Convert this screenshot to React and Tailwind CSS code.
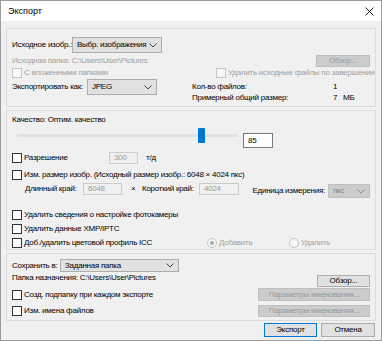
import React from "react";

function Chevron({ color = "#333" }) {
  return (
    <svg width="8" height="5" viewBox="0 0 8 5" className="shrink-0">
      <polyline points="0.5,0.5 4,4 7.5,0.5" fill="none" stroke={color} strokeWidth="1" />
    </svg>
  );
}

function Select({ value, className = "", disabled = false }) {
  return (
    <div
      className={`shrink-0 flex items-center justify-between border px-[4px] ${
        disabled ? "bg-[#cccccc] border-[#bfbfbf] text-[#838383]" : "bg-[#e1e1e1] border-[#adadad] text-black"
      } ${className}`}
    >
      <span>{value}</span>
      <Chevron color={disabled ? "#8a8a8a" : "#444"} />
    </div>
  );
}

function Check({ label, disabled = false, className = "" }) {
  return (
    <div className={`shrink-0 flex items-center ${className}`}>
      <span
        className={`w-[10px] h-[10px] border shrink-0 ${
          disabled ? "border-[#c4c4c4] bg-[#f7f7f7]" : "border-[#333333] bg-white"
        }`}
      />
      <span className={`ml-[2px] ${disabled ? "text-[#a0a0a0]" : "text-black"}`}>{label}</span>
    </div>
  );
}

function Radio({ label, checked = false, className = "" }) {
  return (
    <div className={`shrink-0 flex items-center ${className}`}>
      <span className="w-[10px] h-[10px] rounded-full border border-[#c4c4c4] bg-[#f7f7f7] flex items-center justify-center shrink-0">
        {checked && <span className="w-[4px] h-[4px] rounded-full bg-[#a8a8a8]" />}
      </span>
      <span className="ml-[2px] text-[#a0a0a0]">{label}</span>
    </div>
  );
}

function Btn({ children, className = "", disabled = false, primary = false }) {
  return (
    <div
      className={`shrink-0 flex items-center justify-center border ${
        disabled
          ? "bg-[#cccccc] border-[#bfbfbf] text-[#9a9a9a]"
          : primary
          ? "bg-[#e1e1e1] border-[#0078d7] text-black"
          : "bg-[#e1e1e1] border-[#adadad] text-black"
      } ${className}`}
    >
      {children}
    </div>
  );
}

function Field({ value, className = "", disabled = false }) {
  return (
    <div
      className={`shrink-0 flex items-center px-[4px] border ${
        disabled ? "bg-[#f0f0f0] border-[#cccccc] text-[#9a9a9a]" : "bg-white border-[#7a7a7a] text-black"
      } ${className}`}
    >
      {value}
    </div>
  );
}

export default function App() {
  return (
    <div className="w-[382px] h-[341px] bg-[#f0f0f0] border border-[#9a9a9a] flex flex-col text-[8px] leading-[10px] tracking-[-0.25px] whitespace-nowrap font-['Liberation_Sans',Arial,sans-serif] text-black overflow-hidden">
      {/* title bar */}
      <div className="h-[20px] bg-white flex items-center justify-between pl-[7px] pr-[7px] shrink-0">
        <span className="text-[9px] tracking-normal">Экспорт</span>
        <svg width="9" height="9" viewBox="0 0 9 9">
          <path d="M0.5 0.5 L8.5 8.5 M8.5 0.5 L0.5 8.5" stroke="#222" strokeWidth="1" />
        </svg>
      </div>

      <div className="px-[5px] flex flex-col">
        {/* group: source */}
        <div className="mt-[7px] h-[79px] border border-[#dcdcdc] px-[5px] pt-[8px] flex flex-col">
          <div className="flex items-center h-[16px]">
            <span className="w-[60px] shrink-0">Исходное изобр.:</span>
            <Select value="Выбр. изображения" className="w-[90px] h-[16px]" />
          </div>
          <div className="flex items-center justify-between h-[12px] mt-[2px]">
            <span className="text-[#a0a0a0]">Исходная папка: C:\Users\User\Pictures</span>
            <Btn disabled className="w-[54px] h-[12px]">Обзор...</Btn>
          </div>
          <div className="flex items-center h-[12px]">
            <Check disabled label="С вложенными папками" className="w-[204px]" />
            <Check disabled label="Удалить исходные файлы по завершении" />
          </div>
          <div className="flex">
            <div className="flex items-center h-[16px] w-[180px] shrink-0">
              <span className="w-[75px] shrink-0">Экспортировать как:</span>
              <Select value="JPEG" className="w-[70px] h-[16px]" />
            </div>
            <div className="flex flex-col pt-[2px]">
              <div className="flex h-[11px] items-center">
                <span className="w-[141px] shrink-0">Кол-во файлов:</span>
                <span>1</span>
              </div>
              <div className="flex h-[11px] items-center">
                <span className="w-[141px] shrink-0">Примерный общий размер:</span>
                <span className="w-[10px] shrink-0">7</span>
                <span>МБ</span>
              </div>
            </div>
          </div>
        </div>

        {/* group: quality & metadata */}
        <div className="mt-[3px] h-[140px] border border-[#dcdcdc] px-[5px] pt-[4px] flex flex-col">
          <div className="h-[10px] flex items-center">Качество: Оптим. качество</div>
          <div className="flex items-start h-[20px] mt-[3px]">
            <div className="relative ml-[5px] w-[221px] h-[15px] flex items-center shrink-0">
              <div className="w-full h-[3px] bg-[#e2e2e2]" />
              <div className="absolute left-[181px] top-0 w-[7px] h-[15px] bg-[#0078d7] rounded-[1px]" />
            </div>
            <Field value="85" className="ml-[5px] mt-[5px] w-[30px] h-[15px]" />
          </div>
          <div className="flex items-center h-[12px] mt-[4px]">
            <Check label="Разрешение" className="w-[97px]" />
            <Field disabled value="300" className="w-[29px] h-[12px]" />
            <span className="ml-[8px]">т/д</span>
          </div>
          <div className="flex items-center h-[12px] mt-[5px]">
            <Check label="Изм. размер изобр. (Исходный размер изобр.: 6048 × 4024 пкс)" />
          </div>
          <div className="flex items-start h-[15px] mt-[2px]">
            <div className="flex items-center h-[12px] pl-[13px] shrink-0">
              <span className="w-[58px] shrink-0">Длинный край:</span>
              <Field disabled value="6048" className="w-[39px] h-[12px]" />
              <span className="ml-[9px] w-[11px] shrink-0">×</span>
              <span className="w-[57px] shrink-0">Короткий край:</span>
              <Field disabled value="4024" className="w-[40px] h-[12px]" />
            </div>
            <div className="flex items-center h-[14px] mt-[1px] ml-auto">
              <span className="mr-[3px]">Единица измерения:</span>
              <Select disabled value="пкс" className="w-[42px] h-[14px]" />
            </div>
          </div>
          <div className="flex flex-col gap-[2px] mt-[11px]">
            <Check label="Удалить сведения о настройке фотокамеры" className="h-[12px]" />
            <Check label="Удалить данные XMP/IPTC" className="h-[12px]" />
            <div className="flex items-center h-[12px]">
              <Check label="Доб./удалить цветовой профиль ICC" className="w-[195px]" />
              <Radio checked label="Добавить" className="w-[82px]" />
              <Radio label="Удалить" />
            </div>
          </div>
        </div>

        {/* group: output */}
        <div className="mt-[3px] h-[68px] border border-[#dcdcdc] px-[5px] pt-[5px] flex flex-col">
          <div className="flex items-center h-[13px]">
            <span className="w-[48px] shrink-0">Сохранить в:</span>
            <Select value="Заданная папка" className="w-[119px] h-[13px]" />
          </div>
          <div className="flex items-start justify-between h-[14px] mt-[1px]">
            <span className="leading-[10px]">Папка назначения: C:\Users\User\Pictures</span>
            <Btn className="w-[53px] h-[12px] mt-[2px]">Обзор...</Btn>
          </div>
          <div className="flex items-center justify-between h-[13px] mt-[1px]">
            <Check label="Созд. подпапку при каждом экспорте" />
            <Btn disabled className="w-[112px] h-[13px]">Параметры именования...</Btn>
          </div>
          <div className="flex items-center justify-between h-[12px] mt-[4px]">
            <Check label="Изм. имена файлов" />
            <Btn disabled className="w-[112px] h-[12px]">Параметры именования...</Btn>
          </div>
        </div>

        {/* footer buttons */}
        <div className="flex justify-end gap-[4px] mt-[2px] pr-[1px]">
          <Btn primary className="w-[53px] h-[14px]">Экспорт</Btn>
          <Btn className="w-[54px] h-[14px]">Отмена</Btn>
        </div>
      </div>
    </div>
  );
}
